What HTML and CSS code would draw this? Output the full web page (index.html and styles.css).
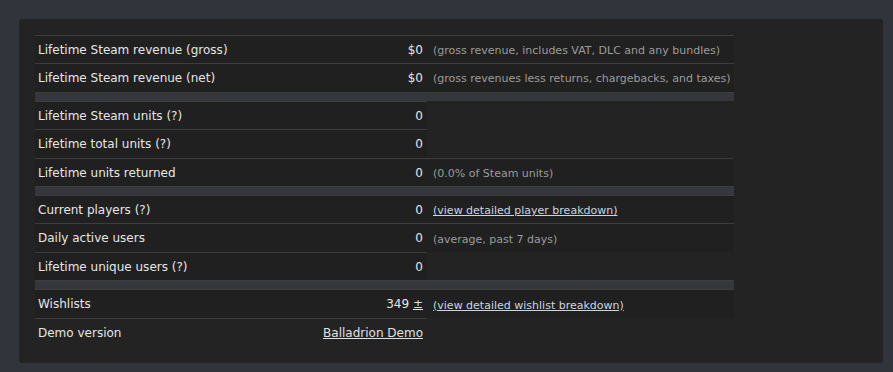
FILE: index.html
```html
<!DOCTYPE html>
<html>
<head>
<meta charset="utf-8">
<link rel="stylesheet" href="styles.css">
</head>
<body>
<div class="panel">
  <table class="stats">
    <colgroup>
      <col class="c-label">
      <col class="c-val">
      <col class="c-desc">
    </colgroup>
    <tr>
      <td class="label">Lifetime Steam revenue (gross)</td>
      <td class="val">$0</td>
      <td class="desc">(gross revenue, includes VAT, DLC and any bundles)</td>
    </tr>
    <tr>
      <td class="label">Lifetime Steam revenue (net)</td>
      <td class="val">$0</td>
      <td class="desc">(gross revenues less returns, chargebacks, and taxes)</td>
    </tr>
    <tr class="spacer"><td colspan="3"></td></tr>
    <tr>
      <td class="label">Lifetime Steam units <span class="tip">(?)</span></td>
      <td class="val">0</td>
    </tr>
    <tr>
      <td class="label">Lifetime total units <span class="tip">(?)</span></td>
      <td class="val">0</td>
    </tr>
    <tr>
      <td class="label">Lifetime units returned</td>
      <td class="val">0</td>
      <td class="desc">(0.0% of Steam units)</td>
    </tr>
    <tr class="spacer"><td colspan="3"></td></tr>
    <tr>
      <td class="label">Current players <span class="tip">(?)</span></td>
      <td class="val">0</td>
      <td class="desc"><a class="link" href="#">(view detailed player breakdown)</a></td>
    </tr>
    <tr>
      <td class="label">Daily active users</td>
      <td class="val">0</td>
      <td class="desc">(average, past 7 days)</td>
    </tr>
    <tr>
      <td class="label">Lifetime unique users <span class="tip">(?)</span></td>
      <td class="val">0</td>
    </tr>
    <tr class="spacer"><td colspan="3"></td></tr>
    <tr>
      <td class="label">Wishlists</td>
      <td class="val">349 <a class="plain" href="#">±</a></td>
      <td class="desc"><a class="link" href="#">(view detailed wishlist breakdown)</a></td>
    </tr>
    <tr class="last">
      <td class="label">Demo version</td>
      <td class="val"><a class="plain" href="#">Balladrion Demo</a></td>
    </tr>
  </table>
</div>
</body>
</html>
```

FILE: styles.css
```css
html, body {
  margin: 0;
  background: #31343b;
}
body {
  padding: 19px 10px 9px 19px;
  font-family: "DejaVu Sans", "Noto Sans", sans-serif;
}
.panel {
  background: #232323;
  border-radius: 3px;
  padding: 16px 16px 17px 16px;
  height: 311px;
}
.stats {
  border-collapse: collapse;
  border-spacing: 0;
  table-layout: fixed;
  width: 699px;
}
.c-label { width: 285px; }
.c-val { width: 107px; }
.c-desc { width: 307px; }
.stats td {
  background: #202020;
  border-top: 1px solid #3d3d3d;
  padding: 6px 4px 4px 3px;
  line-height: 17.4px;
  font-size: 12px;
  color: #e6e6e6;
  white-space: nowrap;
  overflow: visible;
}
.stats td.val {
  text-align: right;
}
.stats td.desc {
  padding-left: 6px;
  font-size: 11px;
  color: #9c9c9c;
}
.stats tr.last td {
  background: transparent;
}
.stats tr.spacer td {
  background: #35373c;
  border-top: 1px solid #3c3e42;
  height: 8px;
  padding: 0;
  line-height: 0;
}
.link {
  color: #c9d6e0;
  text-decoration: underline;
}
.plain {
  color: #e0e0e0;
  text-decoration: underline;
}
```
